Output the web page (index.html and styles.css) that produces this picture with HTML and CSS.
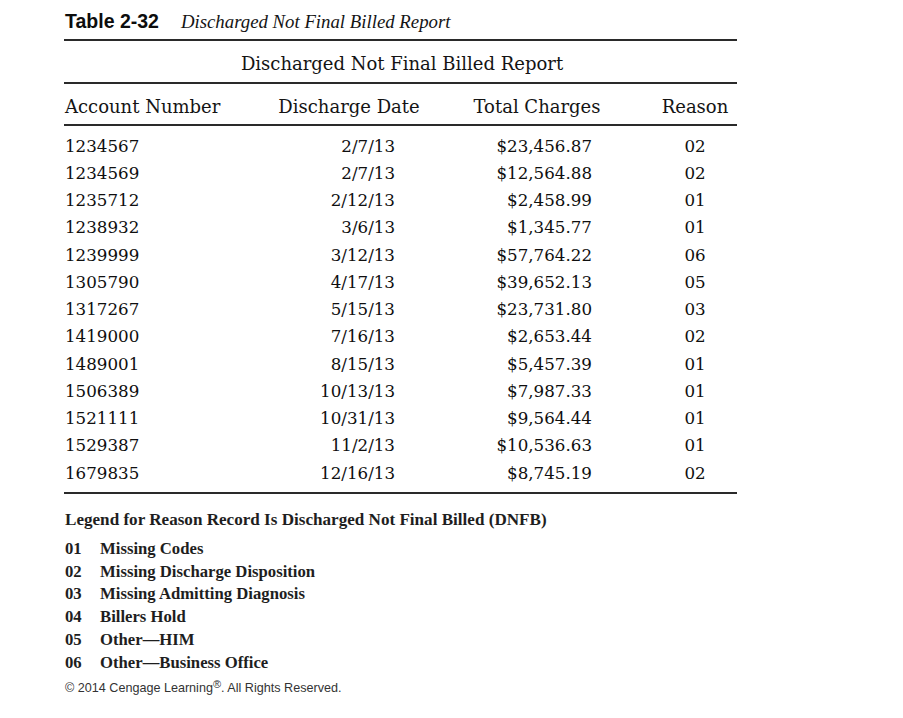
FILE: index.html
```html
<!DOCTYPE html>
<html lang="en">
<head>
<meta charset="utf-8">
<title>Table 2-32 Discharged Not Final Billed Report</title>
<link rel="stylesheet" href="styles.css">
</head>
<body>
<div class="page">
  <div class="title"><span class="label">Table 2-32</span><span class="name">Discharged Not Final Billed Report</span></div>
  <div class="caption">Discharged Not Final Billed Report</div>
  <div class="grid head">
    <div class="c1">Account Number</div>
    <div class="c2">Discharge Date</div>
    <div class="c3">Total Charges</div>
    <div class="c4">Reason</div>
  </div>
  <div class="body">
    <div class="grid row"><div class="c1">1234567</div><div class="c2">2/7/13</div><div class="c3">$23,456.87</div><div class="c4">02</div></div>
    <div class="grid row"><div class="c1">1234569</div><div class="c2">2/7/13</div><div class="c3">$12,564.88</div><div class="c4">02</div></div>
    <div class="grid row"><div class="c1">1235712</div><div class="c2">2/12/13</div><div class="c3">$2,458.99</div><div class="c4">01</div></div>
    <div class="grid row"><div class="c1">1238932</div><div class="c2">3/6/13</div><div class="c3">$1,345.77</div><div class="c4">01</div></div>
    <div class="grid row"><div class="c1">1239999</div><div class="c2">3/12/13</div><div class="c3">$57,764.22</div><div class="c4">06</div></div>
    <div class="grid row"><div class="c1">1305790</div><div class="c2">4/17/13</div><div class="c3">$39,652.13</div><div class="c4">05</div></div>
    <div class="grid row"><div class="c1">1317267</div><div class="c2">5/15/13</div><div class="c3">$23,731.80</div><div class="c4">03</div></div>
    <div class="grid row"><div class="c1">1419000</div><div class="c2">7/16/13</div><div class="c3">$2,653.44</div><div class="c4">02</div></div>
    <div class="grid row"><div class="c1">1489001</div><div class="c2">8/15/13</div><div class="c3">$5,457.39</div><div class="c4">01</div></div>
    <div class="grid row"><div class="c1">1506389</div><div class="c2">10/13/13</div><div class="c3">$7,987.33</div><div class="c4">01</div></div>
    <div class="grid row"><div class="c1">1521111</div><div class="c2">10/31/13</div><div class="c3">$9,564.44</div><div class="c4">01</div></div>
    <div class="grid row"><div class="c1">1529387</div><div class="c2">11/2/13</div><div class="c3">$10,536.63</div><div class="c4">01</div></div>
    <div class="grid row"><div class="c1">1679835</div><div class="c2">12/16/13</div><div class="c3">$8,745.19</div><div class="c4">02</div></div>
  </div>
  <div class="legend">
    <div class="legend-title">Legend for Reason Record Is Discharged Not Final Billed (DNFB)</div>
    <ul class="legend-list">
      <li><span class="code">01</span><span>Missing Codes</span></li>
      <li><span class="code">02</span><span>Missing Discharge Disposition</span></li>
      <li><span class="code">03</span><span>Missing Admitting Diagnosis</span></li>
      <li><span class="code">04</span><span>Billers Hold</span></li>
      <li><span class="code">05</span><span>Other—HIM</span></li>
      <li><span class="code">06</span><span>Other—Business Office</span></li>
    </ul>
    <div class="copyright">© 2014 Cengage Learning<sup>®</sup>. All Rights Reserved.</div>
  </div>
</div>
</body>
</html>
```
FILE: styles.css
```css
html, body {
  margin: 0;
  padding: 0;
  background: #ffffff;
}

.page {
  width: 673px;
  margin-left: 64px;
  padding-top: 9px;
  color: #141414;
}

.title {
  height: 24px;
  line-height: 24px;
  margin-bottom: 6px;
  display: flex;
  align-items: baseline;
  gap: 22px;
  padding-left: 1px;
}

.title .label {
  font-family: "Liberation Sans", Arial, sans-serif;
  font-weight: bold;
  font-size: 19.5px;
  color: #0d0d0d;
}

.title .name {
  font-family: "Liberation Serif", "Times New Roman", serif;
  font-style: italic;
  font-size: 18.8px;
}

.caption {
  border-top: 2px solid #2a2a2a;
  border-bottom: 2px solid #2a2a2a;
  font-family: "DejaVu Serif", serif;
  font-size: 18px;
  line-height: 37px;
  padding-top: 4px;
  text-align: center;
  padding-left: 3px;
}

.grid {
  display: grid;
  grid-template-columns: 196px 176px 217px 84px;
}

.head {
  font-family: "DejaVu Serif", serif;
  font-size: 18px;
  line-height: 34px;
  padding-top: 6px;
  border-bottom: 2px solid #2a2a2a;
}

.head .c1 { padding-left: 1px; }
.head .c2 { text-align: center; padding-left: 2px; }
.head .c3 { text-align: center; padding-right: 15px; }
.head .c4 { text-align: center; }

.body {
  padding-top: 6.6px;
  padding-bottom: 5px;
  border-bottom: 2px solid #2a2a2a;
}

.row {
  font-family: "DejaVu Serif", serif;
  font-size: 16.7px;
  line-height: 27.25px;
  color: #0f0f0f;
}

.row .c1 { padding-left: 1px; }
.row .c2 { text-align: right; padding-right: 41px; }
.row .c3 { text-align: right; padding-right: 61px; }
.row .c4 { text-align: center; }

.legend {
  padding-top: 15px;
  padding-left: 1px;
}

.legend-title {
  font-family: "Liberation Serif", "Times New Roman", serif;
  font-weight: bold;
  font-size: 17.1px;
  line-height: 22px;
  color: #1e1e1e;
}

.legend-list {
  list-style: none;
  margin: 7px 0 0 0;
  padding: 0;
  font-family: "Liberation Serif", "Times New Roman", serif;
  font-weight: bold;
  font-size: 16.7px;
  line-height: 22.8px;
  color: #1e1e1e;
}

.legend-list li {
  display: flex;
}

.legend-list .code {
  width: 35px;
  flex: none;
}

.copyright {
  margin-top: 5.6px;
  font-family: "Liberation Sans", Arial, sans-serif;
  font-size: 12.6px;
  line-height: 16px;
  color: #333;
}

.copyright sup {
  font-size: 11px;
  line-height: 0;
  vertical-align: 4px;
}
```
